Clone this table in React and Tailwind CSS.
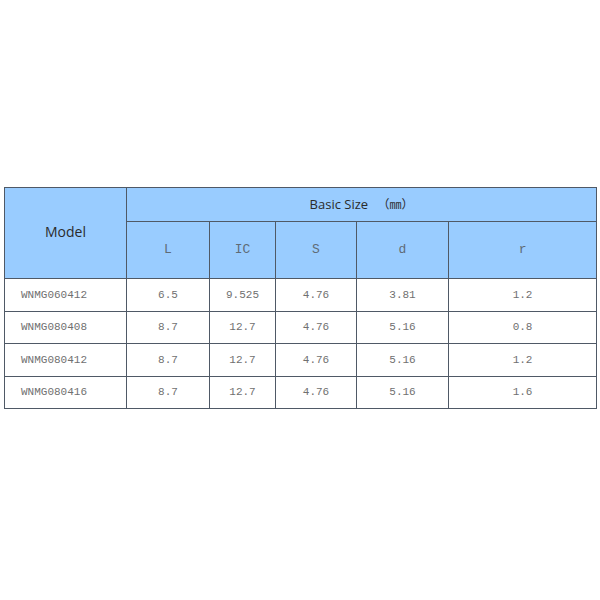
const rows = [
  ['WNMG060412', '6.5', '9.525', '4.76', '3.81', '1.2'],
  ['WNMG080408', '8.7', '12.7', '4.76', '5.16', '0.8'],
  ['WNMG080412', '8.7', '12.7', '4.76', '5.16', '1.2'],
  ['WNMG080416', '8.7', '12.7', '4.76', '5.16', '1.6'],
];

const cell = 'border border-[#4f5966]';
const mono = 'font-["Liberation_Mono",monospace] text-[11px] text-[#707070]';

export default function App() {
  return (
    <div className="w-[600px] h-[600px] bg-white pt-[187px] pl-[4px]">
      <table className="table-fixed border-collapse w-[592px]">
        <colgroup>
          <col className="w-[122px]" />
          <col className="w-[83px]" />
          <col className="w-[66px]" />
          <col className="w-[81px]" />
          <col className="w-[92px]" />
          <col className="w-[148px]" />
        </colgroup>
        <thead>
          <tr className="h-[34px] bg-[#99ccff]">
            <th rowSpan={2} className={`${cell} font-["Open_Sans",sans-serif] font-normal text-[14px] text-[#2b2b2b] pb-[4px]`}>
              Model
            </th>
            <th colSpan={5} className={`${cell} font-["Open_Sans",sans-serif] font-normal text-[13px] text-[#2b2b2b]`}>
              Basic Size <span className='font-["Noto_Sans_CJK_SC",serif] text-[12px] ml-[6px]'>（㎜）</span>
            </th>
          </tr>
          <tr className="h-[57px] bg-[#99ccff]">
            {['L', 'IC', 'S', 'd', 'r'].map((h) => (
              <th key={h} className={`${cell} font-["Liberation_Mono",monospace] font-normal text-[13px] text-[#5f6b76]`}>
                {h}
              </th>
            ))}
          </tr>
        </thead>
        <tbody>
          {rows.map((r, i) => (
            <tr key={i} className="h-[32.5px]">
              {r.map((v, j) => (
                <td key={j} className={`${cell} ${mono} ${j === 0 ? 'text-left pl-[16px]' : 'text-center'}`}>
                  {v}
                </td>
              ))}
            </tr>
          ))}
        </tbody>
      </table>
    </div>
  );
}
